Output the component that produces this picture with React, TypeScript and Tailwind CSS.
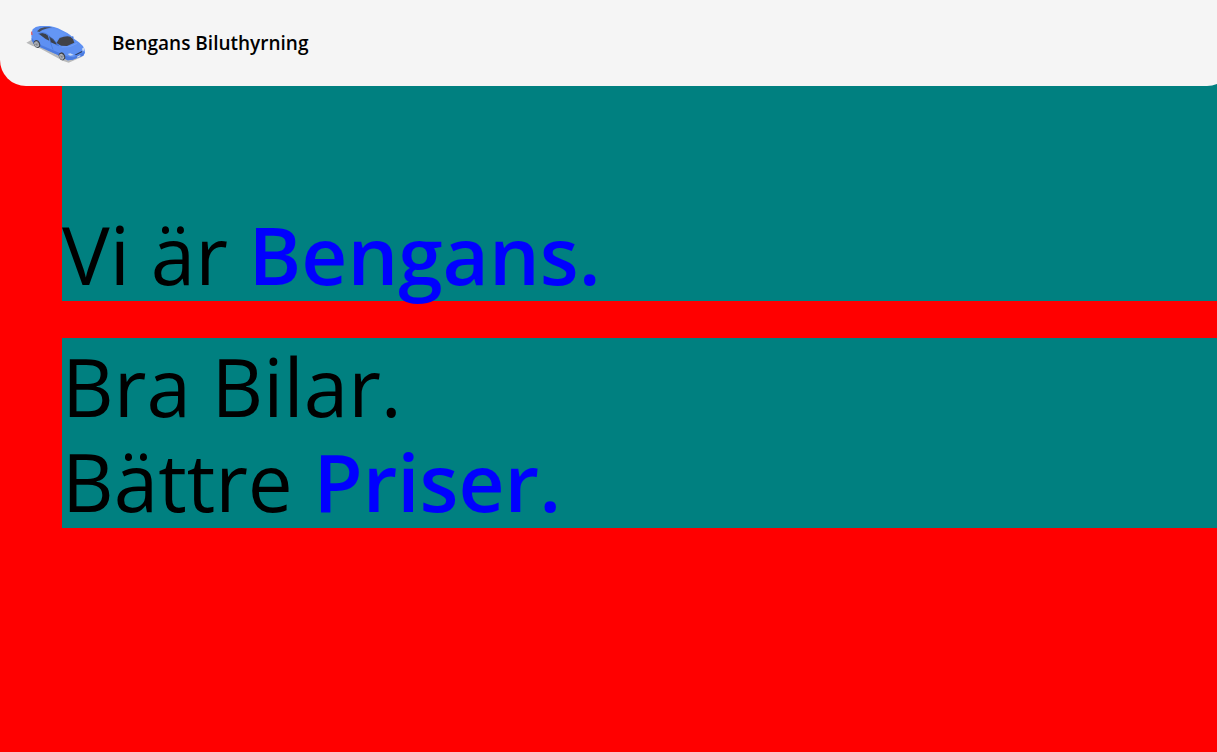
function CarLogo() {
  return (
    <svg
      viewBox="18 24 183 120"
      className="h-10 w-[61px] shrink-0"
      role="img"
      aria-label="Blå bil"
    >
      <path d="M19 83 L35 74 L60 84 L150 125 L190 124 L146 143 L128 137 L62 101 L38 93 Z" fill="#b9babb" />
      <path
        d="M34 57 L38 43 Q46 34 60 33 L88 33 Q103 35 114 40 L142 54 Q153 60 160 70 L177 82 Q190 92 194 103 L195 114 L190 122 L176 126 L158 134 L143 136 L120 124 L112 119 L64 96 L42 88 L35 76 Z"
        fill="#5e90f2"
      />
      <path d="M35 68 L43 79 L64 91 L114 112 L141 124 L160 127 L194 110 L190 122 L158 134 L143 136 L112 119 L64 98 L42 88 L35 76 Z" fill="#4a7be0" />
      <path d="M58 51 Q85 38 113 44 L142 57 L119 66 L106 82 L84 60 L68 52 Z" fill="#6496f5" />
      <path d="M51 49 Q59 39 73 37 L97 37 Q79 40 67 45 L58 51 Z" fill="#454c5c" />
      <path d="M56 56 L67 54 Q79 56 84 62 L88 77 L77 72 Z" fill="#3b404b" />
      <path d="M87 64 Q99 70 106 80 L113 91 L92 82 Z" fill="#3b404b" />
      <path d="M109 85 L119 69 Q137 62 151 65 L159 72 L163 83 L141 93 L124 92 Z" fill="#414248" />
      <path d="M54 57 Q72 47 87 62 L108 82 L116 92" fill="none" stroke="#3c69c6" strokeWidth="1.5" />
      <path d="M88 63 L92 84 L99 104" fill="none" stroke="#3f6dcc" strokeWidth="1.5" />
      <path d="M125 96 Q151 99 171 85" fill="none" stroke="#78a5fb" strokeWidth="2" />
      <path d="M155 63 L161 65 L160 71 L155 68 Z M109 85 L117 88 L116 94 L109 91 Z" fill="#477add" />
      <path d="M33 52 L36 48 L38 60 L34 60 Z" fill="#e6605f" />
      <ellipse cx="51" cy="87" rx="9" ry="12" fill="#3c4048" transform="rotate(-24 51 87)" />
      <ellipse cx="50" cy="88" rx="7" ry="9" fill="#b4b8bf" transform="rotate(-24 50 88)" />
      <path d="M45 82 L56 95 M53 80 L47 97 M43 89 L58 87" stroke="#747981" strokeWidth="1.5" />
      <ellipse cx="126" cy="124" rx="9" ry="12" fill="#3c4048" transform="rotate(-24 126 124)" />
      <ellipse cx="125" cy="125" rx="7" ry="9" fill="#b4b8bf" transform="rotate(-24 125 125)" />
      <path d="M120 119 L131 132 M128 117 L122 134 M118 126 L133 124" stroke="#747981" strokeWidth="1.5" />
      <path d="M143 117 L151 115 L162 120 L150 122 Z M186 101 L191 97 L194 105 L188 109 Z" fill="#c9daf5" />
      <path d="M164 119 L187 107 L186 112 L168 121 Z" fill="#2c3c60" />
      <path d="M171 125 L181 120 L181 124 L172 128 Z" fill="#d5deeb" />
    </svg>
  );
}

export default function App() {
  return (
    <div className="min-h-screen overflow-x-hidden bg-[#ff0000] font-['Trebuchet_MS','Open_Sans',sans-serif] text-black">
      <header className="fixed top-0 left-0 -right-4 z-10 flex h-[86px] items-center gap-[25px] rounded-b-[26px] bg-[#f5f5f5] px-[26px]">
        <CarLogo />
        <p className="text-[19px] font-semibold">Bengans Biluthyrning</p>
      </header>
      <main className="flex flex-col gap-[37px] pl-[62px] text-[80px] leading-[95px]">
        <section className="bg-[#008080] pt-[206px]">
          <h1>
            Vi är <strong className="font-semibold text-[#0000ff]">Bengans.</strong>
          </h1>
        </section>
        <section className="bg-[#008080]">
          <p>Bra Bilar.</p>
          <p>
            Bättre <strong className="font-semibold text-[#0000ff]">Priser.</strong>
          </p>
        </section>
      </main>
    </div>
  );
}
